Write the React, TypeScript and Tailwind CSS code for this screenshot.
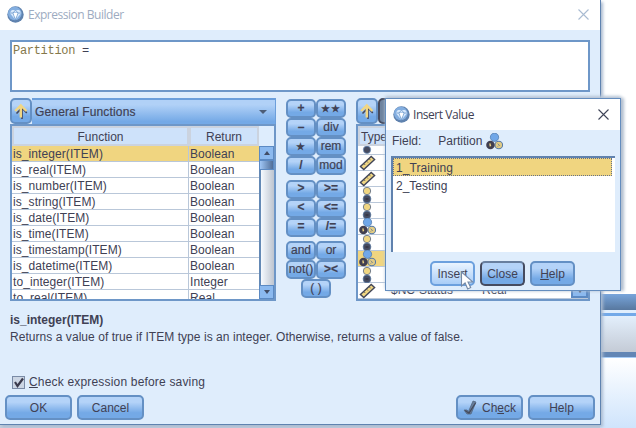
import React from "react";

const BTN =
  "flex items-center justify-center rounded-[5px] border-2 border-[#6490c4] bg-linear-to-b from-[#b4d3f8] from-25% to-[#74a9e6] to-75%";

const functions: [string, string][] = [
  ["is_integer(ITEM)", "Boolean"],
  ["is_real(ITEM)", "Boolean"],
  ["is_number(ITEM)", "Boolean"],
  ["is_string(ITEM)", "Boolean"],
  ["is_date(ITEM)", "Boolean"],
  ["is_time(ITEM)", "Boolean"],
  ["is_timestamp(ITEM)", "Boolean"],
  ["is_datetime(ITEM)", "Boolean"],
  ["to_integer(ITEM)", "Integer"],
  ["to_real(ITEM)", "Real"],
];

const operatorGroups = [
  ["+", "★★", "–", "div", "★", "rem", "/", "mod"],
  [">", ">=", "<", "<=", "=", "/="],
  ["and", "or", "not()", "><"],
];

function Diamond() {
  return (
    <svg width="17" height="17" viewBox="0 0 17 17" className="shrink-0">
      <circle cx="8.5" cy="8.5" r="8.2" fill="#5f82ae" />
      <circle cx="7.8" cy="7.5" r="6.8" fill="#83aee0" />
      <path d="M4.8 4h7.4l2.2 3-5.9 7L2.7 7z" fill="#d6e8fc" />
      <path d="M2.7 7h11.7M8.5 14 6 7l2.5-3L11 7z" fill="none" stroke="#6f9acb" strokeWidth=".8" />
      <path d="M6.4 7h4.2l-2.1 5z" fill="#fff" />
    </svg>
  );
}

function Cross({ color }: { color: string }) {
  return (
    <svg width="11" height="11" viewBox="0 0 11 11">
      <path d="M.5.5l10 10M10.5.5l-10 10" stroke={color} strokeWidth="1.1" />
    </svg>
  );
}

function UpArrow() {
  return (
    <svg width="16" height="18" viewBox="0 0 16 18" className="shrink-0">
      <path d="M9 5v12M3.5 11.5 9 6l4.8 5" fill="none" stroke="#45485c" strokeWidth="1.6" />
      <path d="M7.8 15.5V4M2.2 9l5.6-5.6L13.4 9" fill="none" stroke="#f1d683" strokeWidth="2.4" />
    </svg>
  );
}

function Nominal({ size = 17 }: { size?: number }) {
  return (
    <svg width={size} height={size} viewBox="0 0 16 16" className="shrink-0">
      <circle cx="8" cy="4" r="3.9" fill="#70a7e8" stroke="#5882b4" strokeWidth=".8" />
      <circle cx="12" cy="11.3" r="3.6" fill="#e2cc84" stroke="#5579a6" strokeWidth="1" />
      <circle cx="4.2" cy="11.3" r="4" fill="#413f50" />
      <path d="M3 10.5h1.5M3.4 12.5l1.2-1.2" stroke="#f1d683" strokeWidth="1.1" />
      <path d="M11 10l2 2M11 12.8l1-1" stroke="#6c7c92" strokeWidth=".8" />
    </svg>
  );
}

function Flag() {
  return (
    <svg width="10" height="16" viewBox="0 0 10 16" className="shrink-0">
      <circle cx="5" cy="4" r="3.7" fill="#f0d682" stroke="#68758a" strokeWidth=".9" />
      <circle cx="5" cy="11.9" r="3.9" fill="#454b60" stroke="#5a7ca8" strokeWidth=".7" />
      <path d="M3.5 12h3" stroke="#353544" strokeWidth="1.6" />
    </svg>
  );
}

function Ruler() {
  return (
    <svg width="17" height="16" viewBox="0 0 17 16" className="shrink-0">
      <path d="M1.4 11.4 12.2 1.4l3.4 3L4.8 14.6z" fill="#f0d682" stroke="#424658" strokeWidth="1.4" />
      <path d="M5 8.7l1.2 1.3M7.8 6.3 9 7.6M10.4 4l1.2 1.3" stroke="#5c5b58" strokeWidth=".9" />
    </svg>
  );
}

const typeIcons = [Ruler, Ruler, Flag, Flag, Nominal, Flag, Nominal, Flag, Ruler];

function Operator({ label }: { label: string }) {
  const symbol = !/[a-z(]/.test(label);
  return (
    <div
      className={`${BTN} h-[19px] w-[30px] leading-none ${symbol ? "text-[12px] font-bold" : "text-[12px]"}`}
    >
      {label.includes("★") ? (
        <span className="text-[10px] tracking-[1px]">{label}</span>
      ) : (
        <span className="relative -top-px [-webkit-text-stroke:0.2px_#404154]">{label}</span>
      )}
    </div>
  );
}

function MainWindow() {
  return (
    <div className="absolute top-0 left-0 flex h-[425px] w-[601px] flex-col border-r border-b border-[#5f83b0] bg-[#dfedfc] shadow-[2px_2px_3px_#aabbd0]">
      <div className="flex h-[30px] shrink-0 items-center bg-white pr-[11px] pb-px pl-[7px]">
        <Diamond />
        <span className="ml-[4px] font-['Open_Sans'] text-[12px] tracking-[-0.48px] text-[#9dabc1]">Expression Builder</span>
        <span className="ml-auto">
          <Cross color="#a9bbd2" />
        </span>
      </div>

      <div className="mx-[10px] mt-[10px] h-[52px] shrink-0 border-2 border-[#6e97c8] bg-white pt-[2px] pl-px font-['Liberation_Mono'] text-[12px] leading-[15px] tracking-[-0.3px] whitespace-pre">
        <span className="text-[#85784a]">Partition</span> =
      </div>

      <div className="mt-[6px] flex shrink-0 items-start px-[10px]">
        <div className="w-[266px]">
          <div className="flex h-[26px]">
            <div className={`${BTN} w-[22px]`}>
              <UpArrow />
            </div>
            <div className="flex flex-1 items-center border-t-2 border-r border-[#6c9fdb] bg-linear-to-b from-[#b1d1f7] from-20% to-[#74a9e6] to-90% pr-[8px] pl-[3px] text-[12px] tracking-[0.15px]">
              <span className="[-webkit-text-stroke:0.2px_#404154]">General Functions</span>
              <span className="ml-auto h-0 w-0 border-x-4 border-t-4 border-x-transparent border-t-[#4d5d76]" />
            </div>
          </div>
          <div className="flex h-[177px] overflow-hidden border-2 border-[#6e97c8] bg-white">
            <div className="w-[247px] overflow-hidden">
              <div className="flex h-[20px] bg-[#deedfd] text-[12px]">
                <div className="w-[177px] border-2 border-[#cbd3df] bg-[#cee2fa] text-center leading-[18px]">Function</div>
                <div className="flex-1 border-2 border-[#cbd3df] bg-[#cee2fa] text-center leading-[18px]">Return</div>
              </div>
              {functions.map(([name, type], i) => (
                <div
                  key={name}
                  className={`flex h-[16px] border-b border-[#b9c7d9] text-[12px] leading-[16px] tracking-[0.08px] ${i === 0 ? "bg-[#f0d580]" : ""}`}
                >
                  <div className="w-[177px] border-r border-[#b9c7d9] pl-px">{name}</div>
                  <div className="pl-px">{type}</div>
                </div>
              ))}
            </div>
            <div className="flex flex-1 flex-col bg-[#deedfd] pt-[20px]">
              <div className="flex h-[14px] items-center justify-center border border-[#5c8ac3] bg-[#8bb9ef]">
                <span className="h-0 w-0 border-x-3 border-b-4 border-x-transparent border-b-[#414c65]" />
              </div>
              <div className="h-[10px] border border-[#5c8ac3] bg-linear-to-r from-[#9fc6f5] to-[#526f98]" />
              <div className="flex-1 border-l-2 border-[#6489b5] bg-linear-to-r from-[#f6faff] to-[#bec5d0]" />
              <div className="flex h-[14px] items-center justify-center border border-[#5c8ac3] bg-[#8bb9ef]">
                <span className="h-0 w-0 border-x-3 border-t-4 border-x-transparent border-t-[#414c65]" />
              </div>
            </div>
          </div>
        </div>

        <div className="ml-[10px] flex w-[60px] flex-col pt-[1px]">
          {operatorGroups.map((group, i) => (
            <div key={i} className={`grid grid-cols-2 ${i > 0 ? "mt-[4.5px]" : ""}`}>
              {group.map((label) => (
                <Operator key={label} label={label} />
              ))}
            </div>
          ))}
          <div className="flex justify-center">
            <Operator label="( )" />
          </div>
        </div>

        <div className="ml-[10px] w-[234px]">
          <div className="flex h-[26px]">
            <div className={`${BTN} w-[22px]`}>
              <UpArrow />
            </div>
            <div className="w-[24px] rounded-[5px] border-2 border-[#454b5f] bg-[#6d839f]" />
          </div>
          <div className="h-[177px] overflow-hidden border-2 border-[#6e97c8] bg-white">
            <div className="h-[20px] w-[40px] border-2 border-[#cbd3df] bg-[#cee2fa] pl-px text-[12px] leading-[18px]">Type</div>
            <div className="flex h-[9px] items-end border-b border-[#b9c7d9] pl-[4px]">
              <svg width="10" height="8" viewBox="0 0 10 8">
                <circle cx="5" cy="3.8" r="3.7" fill="#454b60" stroke="#7197c5" strokeWidth=".7" />
              </svg>
            </div>
            {typeIcons.map((Icon, i) => (
              <div
                key={i}
                className={`flex h-[16px] items-center border-b border-[#b9c7d9] text-[12px] leading-[15px] ${i === 6 ? "bg-[#f0d580]" : ""}`}
              >
                <span className="flex w-[18px] shrink-0 justify-center">
                  <Icon />
                </span>
                {i === 8 && (
                  <>
                    <span className="ml-[15px] w-[91px]">$NC-Status</span>
                    <span>Real</span>
                    <span className="ml-auto flex h-[15px] w-[17px] items-center justify-center border-2 border-[#5c8ac3] bg-[#8bb9ef]">
                      <span className="h-0 w-0 border-x-3 border-t-4 border-x-transparent border-t-[#414c65]" />
                    </span>
                  </>
                )}
              </div>
            ))}
          </div>
        </div>
      </div>

      <div className="mt-[11px] shrink-0 px-[10px]">
        <div className="text-[12px] leading-[17px] font-bold">is_integer(ITEM)</div>
        <div className="text-[12px] leading-[17px] tracking-[0.05px] whitespace-nowrap">
          Returns a value of true if ITEM type is an integer. Otherwise, returns a value of false.
        </div>
      </div>

      <div className="mt-[29px] flex h-[14px] shrink-0 items-center pl-[12px] text-[12px]">
        <svg width="13" height="13" viewBox="0 0 13 13">
          <rect x=".5" y=".5" width="12" height="12" fill="#ccd6e4" stroke="#7a8ba6" />
          <path d="M3 6l2.5 4L11 2.5" fill="none" stroke="#3b3b4d" strokeWidth="2.2" />
        </svg>
        <span className="ml-[4px] tracking-[0.18px]">
          <u>C</u>heck expression before saving
        </span>
      </div>

      <div className="mt-[6px] flex shrink-0 gap-[5px] px-[5px] text-[12px]">
        <button className={`${BTN} h-[25px] w-[67px]`}>OK</button>
        <button className={`${BTN} h-[25px] w-[67px]`}>Cancel</button>
        <button className={`${BTN} ml-auto h-[25px] w-[67px] gap-[4px]`}>
          <svg width="15" height="15" viewBox="0 0 15 15">
            <path d="M1 10h3l1.5 1.5L10 1l3 1-5 12H4z" fill="#667e9c" stroke="#4f6079" strokeWidth=".7" />
            <path d="M2 10.5l4 2.5L12.5 3" fill="none" stroke="#454a5c" strokeWidth="1.3" />
          </svg>
          <span>
            Ch<u>e</u>ck
          </span>
        </button>
        <button className={`${BTN} h-[25px] w-[67px]`}>Help</button>
      </div>
    </div>
  );
}

function InsertDialog() {
  return (
    <div className="absolute top-[98px] left-[385px] flex h-[193px] w-[236px] flex-col border border-[#648dbe] bg-[#dfedfc] shadow-[3px_0_3px_#b3bfcf,0_-2px_3px_#bccadb]">
      <div className="flex h-[31px] shrink-0 items-center bg-white pr-[11px] pl-[7px]">
        <Diamond />
        <span className="ml-[3px] font-['Open_Sans'] text-[12px] tracking-[-0.45px]">Insert Value</span>
        <span className="ml-auto">
          <Cross color="#3f4458" />
        </span>
      </div>
      <div className="flex h-[26px] shrink-0 items-center pb-[4px] pl-[6px] text-[12px]">
        <span>Field:</span>
        <span className="ml-[17px]">Partition</span>
        <span className="ml-[4px]">
          <Nominal size={17} />
        </span>
      </div>
      <div className="mr-[5px] ml-[5px] h-[96px] shrink-0 border-t-2 border-l-2 border-[#6082ae] bg-white text-[12px]">
        <div className="mr-[3px] h-[18px] border border-dotted border-[#66728a] bg-[#f0d580] pl-[2px] leading-[18px] tracking-[0.08px]">1_Training</div>
        <div className="h-[18px] pl-[3px] leading-[20px]">2_Testing</div>
      </div>
      <div className="mt-[9px] flex gap-[5px] pl-[44px] text-[12px]">
        <button className="h-[25px] w-[45px] rounded-[5px] border-2 border-[#6ca0de] bg-linear-to-b from-[#eaf4ff] to-[#a9cdf7]">Insert</button>
        <button className="h-[25px] w-[45px] rounded-[5px] border-2 border-[#454b60] border-t-[#687f9f] bg-linear-to-b from-[#b4d3f8] from-25% to-[#74a9e6] to-75%">Close</button>
        <button className={`${BTN} h-[25px] w-[45px]`}>
          <span>
            <u>H</u>elp
          </span>
        </button>
      </div>
    </div>
  );
}

export default function App() {
  return (
    <div className="relative flex h-[428px] w-[636px] overflow-hidden bg-white font-['Liberation_Sans',sans-serif] text-[#404154]">
      <div className="h-[3px] w-[600px] self-end bg-[#c2cedd]" />
      <div className="flex h-full flex-1 flex-col pt-[294px]">
        <div className="h-[16px] bg-linear-to-b from-[#78a5db] to-[#58789f]" />
        <div className="h-[3px] bg-[#e0eefd]" />
        <div className="h-[3px] bg-[#73a9e8]" />
        <div className="h-[36px] bg-linear-to-b from-[#e3effc] to-[#c4cbd6]" />
        <div className="h-[6px] border-b border-[#a7cdf8] bg-[#6286b5]" />
        <div className="flex-1 bg-linear-to-b from-white to-[#cfe4fc]" />
      </div>
      <MainWindow />
      <InsertDialog />
      <svg className="absolute top-[271px] left-[460px]" width="14" height="20" viewBox="0 0 14 20">
        <path d="M1.5 1v14l3.6-3 2.6 6 3-1.4L8 11h5z" fill="#fff" stroke="#7589a6" strokeWidth="1.1" />
      </svg>
    </div>
  );
}
